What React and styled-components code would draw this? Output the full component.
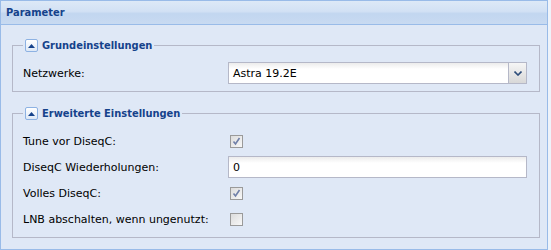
import React from 'react';
import styled, { createGlobalStyle } from 'styled-components';

const GlobalStyle = createGlobalStyle`
  html, body {
    margin: 0;
    padding: 0;
    background: #eef3fa;
  }
  body {
    font-family: "DejaVu Sans", Tahoma, sans-serif;
    font-size: 11px;
  }
`;

const Panel = styled.div`
  width: 546px;
  height: 248px;
  border: 1px solid #99bbe8;
  background: #dfe8f6;
  display: flex;
  flex-direction: column;
  overflow: hidden;
`;

const Header = styled.div`
  height: 23px;
  border-bottom: 1px solid #99bbe8;
  background: linear-gradient(#dde9f7 0%, #d2e1f4 45%, #c2d6f0 55%, #c8daf1 100%);
  display: flex;
  align-items: center;
  padding-left: 5px;
  color: #15428b;
  font-family: "DejaVu Sans Condensed", "DejaVu Sans", sans-serif;
  font-weight: bold;
  font-size: 11px;
`;

const Body = styled.div`
  padding: 13px 7px 0 11px;
  display: flex;
  flex-direction: column;
  gap: 14px;
`;

const FieldSet = styled.fieldset`
  margin: 0;
  border: 1px solid #b5b8c8;
  padding: 9px 12px 3px 10px;
  min-width: 0;
`;

const Legend = styled.legend`
  padding: 0 2px;
  display: flex;
  align-items: center;
  gap: 4px;
  color: #15428b;
  font-family: "DejaVu Sans Condensed", "DejaVu Sans", sans-serif;
  font-weight: bold;
  font-size: 11px;
  height: 15px;
`;

const Toggle = styled.span`
  width: 11px;
  height: 11px;
  border: 1px solid #8db2e3;
  border-radius: 2px;
  background: linear-gradient(#ffffff, #dde8f6);
  display: flex;
  align-items: center;
  justify-content: center;
`;

const Row = styled.div`
  display: grid;
  grid-template-columns: 205px 1fr;
  align-items: center;
  height: 22px;
  margin-bottom: 4px;
  color: #000;
`;

const Label = styled.span`
  font-size: 11px;
`;

const TextBox = styled.div`
  height: 20px;
  border: 1px solid #b5b8c8;
  background: linear-gradient(#ececec 0px, #ffffff 6px);
  display: flex;
  align-items: center;
  padding-left: 4px;
  font-size: 11px;
`;

const Combo = styled(TextBox)`
  padding-left: 0;
  justify-content: space-between;
`;

const ComboText = styled.span`
  padding-left: 4px;
`;

const Trigger = styled.span`
  width: 17px;
  height: 20px;
  border-left: 1px solid #b5b8c8;
  background: linear-gradient(#f6f6f6, #d8d8d8);
  display: flex;
  align-items: center;
  justify-content: center;
`;

const Check = styled.span`
  margin-left: 2px;
  width: 11px;
  height: 11px;
  border: 1px solid #9a9a9a;
  background: linear-gradient(135deg, #dcdcdc, #f8f8f8);
  display: flex;
  align-items: center;
  justify-content: center;
`;

const UpArrow = () => (
  <svg width="7" height="4" viewBox="0 0 7 4">
    <path d="M0 4 L3.5 0 L7 4 Z" fill="#15428b" />
  </svg>
);

const DownChevron = () => (
  <svg width="8" height="5" viewBox="0 0 8 5">
    <path d="M0.5 0.5 L4 4 L7.5 0.5" fill="none" stroke="#2d4d7a" strokeWidth="1.6" />
  </svg>
);

const Tick = () => (
  <svg width="9" height="9" viewBox="0 0 9 9">
    <path d="M1.5 4.5 L3.5 7 L7.5 1" fill="none" stroke="#6f7fa8" strokeWidth="1.6" />
  </svg>
);

const CheckBox = ({ checked }) => <Check>{checked && <Tick />}</Check>;

const App = () => (
  <>
    <GlobalStyle />
    <Panel>
      <Header>Parameter</Header>
      <Body>
        <FieldSet>
          <Legend>
            <Toggle><UpArrow /></Toggle>
            Grundeinstellungen
          </Legend>
          <Row>
            <Label>Netzwerke:</Label>
            <Combo>
              <ComboText>Astra 19.2E</ComboText>
              <Trigger><DownChevron /></Trigger>
            </Combo>
          </Row>
        </FieldSet>
        <FieldSet>
          <Legend>
            <Toggle><UpArrow /></Toggle>
            Erweiterte Einstellungen
          </Legend>
          <Row>
            <Label>Tune vor DiseqC:</Label>
            <CheckBox checked />
          </Row>
          <Row>
            <Label>DiseqC Wiederholungen:</Label>
            <TextBox>0</TextBox>
          </Row>
          <Row>
            <Label>Volles DiseqC:</Label>
            <CheckBox checked />
          </Row>
          <Row>
            <Label>LNB abschalten, wenn ungenutzt:</Label>
            <CheckBox />
          </Row>
        </FieldSet>
      </Body>
    </Panel>
  </>
);

export default App;
